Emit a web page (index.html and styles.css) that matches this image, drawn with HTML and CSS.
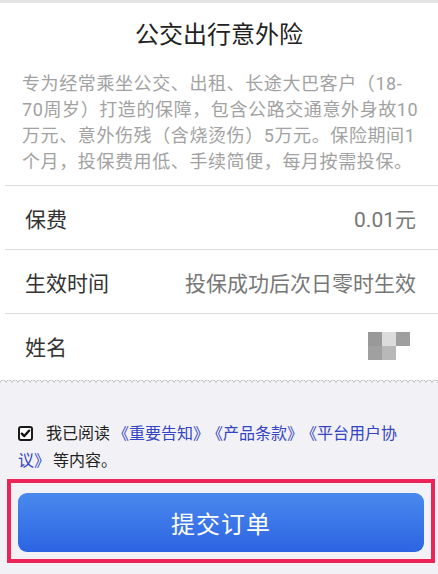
FILE: index.html
```html
<!DOCTYPE html>
<html lang="zh-CN">
<head>
<meta charset="utf-8">
<title>公交出行意外险</title>
<link rel="stylesheet" href="styles.css">
</head>
<body>
<div class="page">
  <div class="topbar"></div>
  <section class="card">
    <h1 class="title">公交出行意外险</h1>
    <p class="desc">专为经常乘坐公交、出租、长途大巴客户（18-<br>70周岁）打造的保障，包含公路交通意外身故10<br>万元、意外伤残（含烧烫伤）5万元。保险期间1<br>个月，投保费用低、手续简便，每月按需投保。</p>
    <div class="row"><span class="label">保费</span><span class="value">0.01元</span></div>
    <div class="row"><span class="label">生效时间</span><span class="value">投保成功后次日零时生效</span></div>
    <div class="row"><span class="label">姓名</span>
      <span class="mosaic"><i class="m1"></i><i class="m2"></i><i class="m3"></i><i class="m4"></i><i class="m5"></i><i class="m6"></i></span>
    </div>
  </section>
  <div class="wave"></div>
  <section class="footer">
    <p class="agree"><span class="check"><svg width="15" height="15" viewBox="0 0 15 15"><rect x="1" y="1" width="13" height="13" rx="2" fill="#fff" stroke="#1a1a1a" stroke-width="2"/><path d="M3.8 7.6 L6.3 10.1 L11.2 4.6" fill="none" stroke="#111" stroke-width="2.3" stroke-linecap="round" stroke-linejoin="round"/></svg></span><span class="plain">我已阅读</span><a class="link">《重要告知》</a><a class="link">《产品条款》</a><a class="link">《平台用户协议》</a><span class="plain">等内容。</span></p>
    <div class="highlight"><button class="submit">提交订单</button></div>
  </section>
</div>
</body>
</html>
```

FILE: styles.css
```css
* { box-sizing: border-box; }
html, body { margin: 0; padding: 0; }
body {
  background: #f2f2f6;
  font-family: Roboto, "Noto Sans CJK SC", sans-serif;
  color: #333;
  width: 438px;
  height: 574px;
  overflow: hidden;
}
.topbar { height: 3px; background: #e4e4e4; }
.card { background: #fff; }
.title {
  margin: 0;
  padding-top: 17px;
  font-size: 24px;
  line-height: 30px;
  font-weight: normal;
  text-align: center;
  color: #222;
}
.desc {
  margin: 21px 0 0;
  padding: 0 10px 10px 22px;
  font-size: 18px;
  line-height: 26px;
  color: #a2a2a2;
  white-space: nowrap;
  letter-spacing: 0.6px;
}
.row {
  display: flex;
  align-items: center;
  justify-content: space-between;
  height: 64px;
  margin-left: 5px;
  padding: 0 22px 0 20px;
  border-top: 1px solid #dcdcdc;
}
.label { font-size: 21px; color: #333; }
.value { font-size: 21px; color: #777; }
.mosaic {
  display: grid;
  grid-template-columns: repeat(3, 14px);
  grid-template-rows: 14px 14px;
  margin-right: 6px;
}
.mosaic i { display: block; }
.m1 { background: #999; }
.m2 { background: #dcdcdc; }
.m3 { background: #9f9f9f; }
.m4 { background: #a0a0a0; }
.m5 { background: #b8b8b8; }
.m6 { background: #fff; }
.wave {
  height: 6px;
  background-color: #fff;
  background-image: radial-gradient(circle at 3px 6px, #f2f2f6 2.3px, #c4c4c4 2.8px, #c4c4c4 3.1px, #fff 3.6px);
  background-size: 6px 6px;
  background-repeat: repeat-x;
}
.footer { padding-top: 37px; }
.agree {
  margin: 0;
  padding: 0 34px 0 18px;
  font-size: 16px;
  line-height: 27px;
  color: #222;
}
.check {
  display: inline-block;
  width: 15px;
  height: 15px;
  margin-right: 13px;
  vertical-align: -2px;
}
.check svg { display: block; }
.link { color: #3344c4; margin: 0 3px; }
.highlight {
  margin: 5px 3px 0 7px;
  padding: 10px 7px 7px;
  border: 4px solid #ec2458;
}
.submit {
  display: block;
  width: 100%;
  height: 59px;
  border: 0;
  border-radius: 9px;
  background: linear-gradient(180deg, #4a89ee 0%, #2c64e2 100%);
  color: #fff;
  font-family: Roboto, "Noto Sans CJK SC", sans-serif;
  font-size: 24px;
  letter-spacing: 1px;
  padding: 0;
}
```
